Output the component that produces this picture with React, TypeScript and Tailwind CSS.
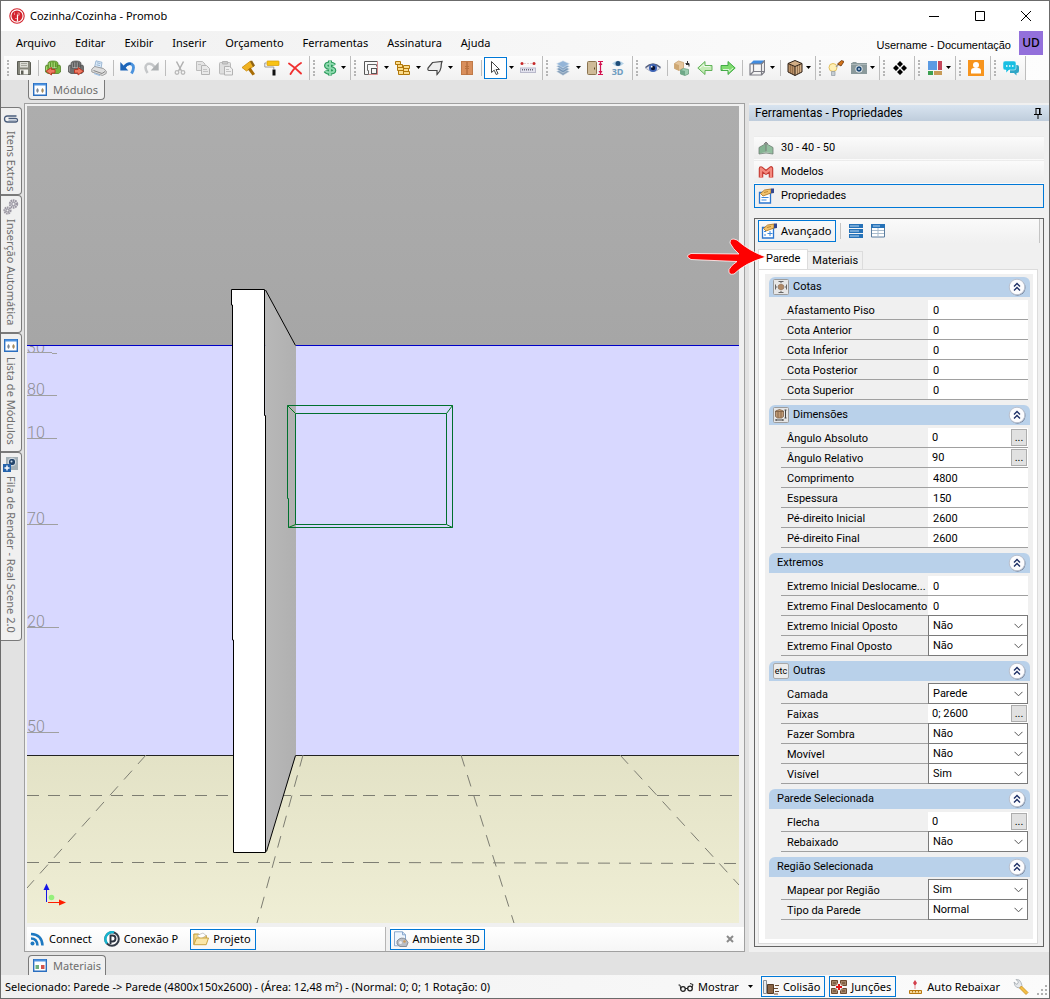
import { useState, type ReactNode } from 'react'
import clsx from 'clsx'

type Field = {
  label: string
  value: string
  kind?: 'text' | 'browse' | 'select'
  options?: string[]
}

type Section = {
  title: string
  icon?: ReactNode
  fields: Field[]
}

const YES_NO = ['Não', 'Sim']

function Svg({ children, className }: { children: ReactNode; className?: string }) {
  return (
    <svg viewBox="0 0 16 16" className={clsx('size-4 shrink-0', className)} fill="none" aria-hidden="true">
      {children}
    </svg>
  )
}

/* ---------- icons ---------- */

const CotasIcon = (
  <Svg>
    <rect x=".5" y=".5" width="15" height="15" rx="1" fill="#e6e6e6" stroke="#9c9c9c" />
    <path d="M5.500 2.500h5M5.500 13.500h5M2.500 5.500v5M13.500 5.500v5M8 3v1M8 13v-1M3 8h1.500M13 8h-1.500" stroke="#666" />
    <path d="M5.500 6.200L8 5l2.500 1.200v3.600L8 11l-2.500-1.200z" fill="#b08a66" stroke="#8a6547" strokeWidth=".6" />
  </Svg>
)

const DimensoesIcon = (
  <Svg>
    <rect x=".5" y=".5" width="15" height="15" rx="1" fill="#e6e6e6" stroke="#9c9c9c" />
    <path d="M2.500 4l4-1.500L10.500 4v5.500l-2 1.500h-4l-2-1.500z" fill="#c09a75" stroke="#6d5038" strokeWidth=".7" />
    <path d="M5 5v5.500M8 5v5.500M2.500 4.500h8" stroke="#6d5038" strokeWidth=".7" />
    <path d="M12.500 3v8M11.500 3h2M11.500 11h2M3 13h7M3 12v2M10 12v2" stroke="#444" />
  </Svg>
)

const EtcIcon = (
  <span className="flex size-4 items-center justify-center rounded-xs border border-[#a9a9a9] bg-[#ececec] text-[9px] leading-none">
    etc
  </span>
)

function LogoIcon() {
  return (
    <Svg>
      <circle cx="8" cy="8" r="7.200" fill="#fff" stroke="#d3242e" strokeWidth="1.100" />
      <circle cx="8" cy="8" r="5.500" fill="#d3242e" />
      <path d="M8.500 6.500v7" stroke="#fff" strokeWidth="1.200" />
      <path d="M8.500 5h1.700v2.200H8.500" stroke="#f6b5b8" strokeWidth=".8" />
      <path d="M5.500 4.500v2.500M6 10.500h2" stroke="#f6b5b8" strokeWidth=".7" />
    </Svg>
  )
}

function SaveIcon() {
  return (
    <Svg>
      <path d="M1.500 1.500h12l1 1v12h-13z" fill="#85867b" stroke="#5b5c54" />
      <path d="M4 2h8v5.500H4z" fill="#dcddd6" />
      <path d="M5 3.500h6M5 5.500h6" stroke="#a5a69d" />
      <path d="M4 9.500h8v5H4z" fill="#f3f3ee" />
      <path d="M5 10.500h2.500v4H5z" fill="#5c5d55" />
    </Svg>
  )
}

function SofaIcon({ color, dark, light, out }: { color: string; dark: string; light: string; out?: boolean }) {
  return (
    <Svg>
      <path d="M3 7.500V3.500Q3 1 8 1t5 2.500v4" fill={color} stroke={dark} strokeWidth=".7" />
      <path d="M.5 7q0-2 1.500-2t2 2v1.500h8V7q.5-2 2-2t1.500 2v5l-2 1.500H3L.5 12z" fill={color} stroke={dark} strokeWidth=".7" />
      <path d="M5.500 2.500v5M8 2v6M10.500 2.500v5" stroke={dark} strokeWidth=".5" />
      <path d="M4.300 3v4M6.800 2.500v5M9.300 2.500v5M1.500 6.500v5" stroke={light} strokeWidth=".8" />
      {out ? (
        <path d="M6.500 9.500h3.500V7.500l5.500 3.700-5.500 3.800v-2H6.500z" fill="#ee7a62" stroke="#b93422" strokeWidth=".9" />
      ) : (
        <path d="M10 9.500H6.500V7.500L1 11.200 6.500 15v-2H10z" fill="#ee7a62" stroke="#b93422" strokeWidth=".9" />
      )}
    </Svg>
  )
}

function PrinterIcon() {
  return (
    <Svg>
      <path d="M3.500 7.500L5 .8l6 1.500L10 8.500z" fill="#dcebf9" stroke="#8aa9cc" strokeWidth=".8" />
      <path d="M6 2.800l3.500.8M5.600 4.800l3.500.8" stroke="#7a9cc0" strokeWidth=".7" />
      <path d="M.8 9l3-2.500 8.500 2L15.200 11v2.500L11.500 15.500.8 12z" fill="#dedede" stroke="#8c8c8c" strokeWidth=".8" />
      <path d="M2.500 10.500l8.500 3 3-2" stroke="#6d6d6d" strokeWidth=".8" />
      <path d="M3 13.500l6 2" stroke="#9ec0e6" strokeWidth="1.300" />
    </Svg>
  )
}

function UndoIcon() {
  return (
    <Svg>
      <path d="M4 7.500Q7.500 2.500 11.500 4q4 2.500 0 9.500" stroke="#4b93de" strokeWidth="2.800" />
      <path d="M4 7.500Q7.500 3 11 4" stroke="#1d65b8" strokeWidth="2.500" />
      <path d="M.3 2v8.500h8z" fill="#1d65b8" />
    </Svg>
  )
}

function RedoIcon() {
  return (
    <Svg>
      <path d="M12 7.500Q8.500 2.500 4.500 4q-4 2.500 0 9" stroke="#c5c7c9" strokeWidth="2.500" />
      <path d="M15.700 2v8.500h-8z" fill="#aeb1b3" />
    </Svg>
  )
}

function CutIcon() {
  return (
    <Svg>
      <path d="M4.500 1.500l5 9.500M11.500 1.500l-5 9.500" stroke="#b0b0b0" strokeWidth="1.500" />
      <circle cx="5" cy="12.500" r="1.800" stroke="#b9b9b9" strokeWidth="1.300" />
      <circle cx="11" cy="12.500" r="1.800" stroke="#b9b9b9" strokeWidth="1.300" />
    </Svg>
  )
}

function CopyIcon() {
  return (
    <Svg>
      <path d="M1.500 1.500h6l2.500 2.500v6.500H1.500z" fill="#e4e4e4" stroke="#bcbcbc" />
      <path d="M6.500 5.500h5l3 3v6h-8z" fill="#e9e9e9" stroke="#b4b4b4" />
      <path d="M8 9.500h4M8 11.500h5M3 4.500h3" stroke="#c4c4c4" />
    </Svg>
  )
}

function PasteIcon() {
  return (
    <Svg>
      <rect x="1.500" y="2.500" width="11" height="11.500" rx="1" fill="#dedede" stroke="#bababa" />
      <path d="M4.500 1.500h5v2.500h-5z" fill="#c9c9c9" stroke="#b4b4b4" />
      <path d="M6.500 6.500h5l3 2.500v6h-8z" fill="#efefef" stroke="#b2b2b2" />
      <path d="M8 9.500h3M8 11.500h5" stroke="#c4c4c4" />
    </Svg>
  )
}

function BrushIcon() {
  return (
    <Svg>
      <path d="M1 7.500L9.500 1l3.500 5-7.500 5z" fill="#f0b323" stroke="#c98a0c" strokeWidth=".8" />
      <path d="M9 1.500l2-1 3 5-2 1.500z" fill="#8f6416" />
      <path d="M7 9.500l2.500-2L14 14l-2.500 1.500z" fill="#a86c05" />
    </Svg>
  )
}

function RollerIcon() {
  return (
    <Svg>
      <rect x="3" y="1" width="12" height="4.500" rx=".5" fill="#f8c314" stroke="#d59a00" strokeWidth=".7" />
      <path d="M2.500 3H.8v4h9v2" stroke="#9a9a9a" />
      <path d="M8.500 9.500h3v6h-3z" fill="#111" />
    </Svg>
  )
}

function DeleteIcon() {
  return (
    <Svg>
      <path d="M2 3.500q6 4 12 10M14 3Q8 6.500 3.500 14" stroke="#f03030" strokeWidth="1.900" strokeLinecap="round" />
    </Svg>
  )
}

function DollarIcon() {
  return (
    <Svg>
      <path d="M12.500 5.300Q11 3.500 8 3.500 4 3.500 4 5.800q0 1.700 4 2.200 4.300.5 4.300 2.500T8 12.700q-3.200 0-4.700-2M8 .5v15" stroke="#2b9a5b" strokeWidth="4" />
      <path d="M12.200 5.200Q10.700 3.600 8 3.600 4.200 3.600 4.200 5.800q0 1.700 3.800 2.200 4.200.5 4.200 2.500T8 12.600q-3 0-4.400-1.800M8 1v14" stroke="#8ed9ae" strokeWidth="2" />
    </Svg>
  )
}

function WallIcon() {
  return (
    <Svg>
      <path d="M1.500 14.500v-13h13" stroke="#555" />
      <path d="M14.500 1.500v13h-9" stroke="#d98a8a" />
      <path d="M1.500 14.500h4v-4h-1v-6h9v2" stroke="#666" />
      <rect x="8.500" y="8.500" width="5" height="5" stroke="#555" />
    </Svg>
  )
}

function BricksIcon() {
  return (
    <Svg>
      <path
        d="M.5 1.500h5v3h-5zM2.500 4.500h5v3h-5zM8.500 5.500h6v3h-6zM2.500 7.500h6v3h-6zM8.500 8.500h5v3h-5zM3.500 10.500h5v4h-5zM8.500 11.500h6v3h-6z"
        fill="#fbdc8c"
        stroke="#b07708"
      />
    </Svg>
  )
}

function ShapeIcon() {
  return (
    <Svg>
      <path d="M5.500 2.500l9.500-1q-1 2.500-1 6-.5 4-4 7v-4H2Q.500 10.500 1 8z" fill="#ededed" stroke="#444" strokeWidth="1.200" />
    </Svg>
  )
}

function DoorIcon() {
  return (
    <Svg>
      <rect x="2.500" y="1.500" width="11" height="13" fill="#d98f5c" stroke="#c07a48" />
      <path d="M8 2v12.500" stroke="#a45f30" />
      <path d="M6 6.500h4M6 8.500h4" stroke="#b8713e" />
    </Svg>
  )
}

function PointerIcon() {
  return (
    <Svg>
      <path d="M3.500 1.500v11l2.700-2.300 2 4.300 1.800-.9-2-4.100h3.500z" fill="#fff" stroke="#444" />
    </Svg>
  )
}

function RulerIcon() {
  return (
    <Svg>
      <circle cx="2" cy="3.500" r="1.500" fill="#c62828" />
      <circle cx="14" cy="3.500" r="1.500" fill="#c62828" />
      <path d="M4.500 3.500h1M7.500 3.500h1M10.500 3.500h1" stroke="#c99" />
      <rect x=".5" y="8" width="15" height="4.500" fill="#e3e3ef" stroke="#b9b9cb" />
      <path d="M2.500 9v1.500M4.500 9v1.500M6.500 9v1.500M8.500 9v1.500M10.500 9v1.500M12.500 9v1.500" stroke="#6a6a7a" />
    </Svg>
  )
}

function LayersIcon() {
  return (
    <Svg>
      <path d="M1.500 11.500l6.500-3 6.500 3L8 15.500z" fill="#8aa2bb" stroke="#dfe8f1" strokeWidth=".5" />
      <path d="M1.500 8.900l6.500-3 6.500 3-6.500 4z" fill="#7595b6" stroke="#dfe8f1" strokeWidth=".5" />
      <path d="M1.500 6.300l6.500-3 6.500 3-6.500 4z" fill="#86a5c6" stroke="#dfe8f1" strokeWidth=".5" />
      <path d="M1.500 3.800l6.500-3 6.500 3-6.500 4z" fill="#94b5d8" stroke="#dfe8f1" strokeWidth=".5" />
    </Svg>
  )
}

function HeightIcon() {
  return (
    <Svg>
      <rect x=".5" y="1.500" width="9" height="13" rx="1" fill="#cfbb98" stroke="#8b7450" />
      <path d="M7.500 7.500v2" stroke="#5b4526" />
      <path d="M11 1.500h5M11 14.500h5M13.500 2v12" stroke="#d3134f" strokeWidth="1.200" />
      <path d="M13.500 2l-2 3h4zM13.500 14l-2-3h4z" fill="#d3134f" />
    </Svg>
  )
}

function View3dIcon() {
  return (
    <span className="flex size-4 flex-col items-center text-[9px] font-bold leading-[9px] text-[#6f9dc0]">
      <svg viewBox="0 0 16 7" className="h-[7px] w-4" aria-hidden="true">
        <path d="M2 3.500Q8-2 14 3.500 8 9 2 3.500" fill="#b5d3e8" />
        <circle cx="8" cy="3.500" r="2.500" fill="#1f4d78" />
      </svg>
      3D
    </span>
  )
}

function EyeIcon() {
  return (
    <Svg>
      <path d="M.3 8Q8 .8 15.700 8 8 14.800.3 8" fill="#dedee8" stroke="#a5a9bd" strokeWidth=".8" />
      <path d="M.5 7.500Q8 .8 15.500 7.500" stroke="#56617f" strokeWidth="1.500" />
      <circle cx="8" cy="8" r="4" fill="#3f66b8" />
      <circle cx="8" cy="8" r="2.200" fill="#0a1230" />
      <circle cx="6.700" cy="6.700" r=".9" fill="#fff" />
    </Svg>
  )
}

function CubesIcon() {
  return (
    <Svg>
      <path d="M.5 3.500L4.500 1l5 1.500V8L5 10.500.5 8.500z" fill="#e5c69c" stroke="#c29a66" strokeWidth=".7" />
      <path d="M.5 3.500L5 5v5.500L.5 8.500z" fill="#cfa873" />
      <path d="M6.500 10l3-1.500 5 1V14l-3.500 1.500-4.500-1.500z" fill="#9dcdb0" stroke="#5e9a76" strokeWidth=".7" />
      <path d="M6.500 10l4.500 1v4.500L6.500 14z" fill="#6fa888" />
      <path d="M11.500 3.500h3.500v3M13.500 1v4M12 4.500h3" stroke="#333" />
    </Svg>
  )
}

function ArrowIcon({ flip }: { flip?: boolean }) {
  return (
    <Svg className={clsx(flip && 'rotate-180')}>
      <path d="M.8 8L8 1.500v4h7v5H8v4z" fill={flip ? '#7fdb6f' : '#c4ecb6'} stroke={flip ? '#35a43c' : '#55ab4c'} strokeWidth=".9" />
      <path d="M3 8l4-3.500v2h6" stroke="#fff" strokeOpacity=".7" />
    </Svg>
  )
}

function FrameCubeIcon() {
  return (
    <Svg>
      <path d="M1 4L4.500.5H16L13 4z" fill="#3f8be0" />
      <path d="M1 4h11.500v11H1zM12.500 4L15.500.8v11L12.500 15M4.500 4v7.500h11M4.500 11.500L1 15" stroke="#7d7d85" strokeWidth="1.200" />
    </Svg>
  )
}

function WoodCubeIcon() {
  return (
    <Svg>
      <path d="M1 3.500l7-3 7 3v8.500l-7 3.500-7-3.500z" fill="#d2ae86" />
      <path d="M1 3.500l7 3v9l-7-3.500z" fill="#b98f65" />
      <path d="M3.500 5v8M5.500 6v8M10.500 6v8M12.500 5v8" stroke="#8a6642" strokeWidth=".8" />
      <path d="M1 3.500l7-3 7 3v8.500l-7 3.500-7-3.500zM1 3.500l7 3 7-3M8 6.500v9" stroke="#2e2117" />
    </Svg>
  )
}

function BulbIcon() {
  return (
    <Svg>
      <circle cx="5" cy="7.500" r="4" fill="#fff0b5" stroke="#e3c05f" />
      <path d="M3.500 11.500h3.500v4H3.500z" fill="#c5cdd3" stroke="#909ba3" strokeWidth=".7" />
      <path d="M8 7l3-3" stroke="#9a9a9a" strokeWidth="1.300" />
      <path d="M9.500 4L13.500.5l2.500 1-3 4.500z" fill="#d2741b" stroke="#6b3408" strokeWidth=".8" />
    </Svg>
  )
}

function CameraIcon() {
  return (
    <Svg>
      <path d="M0 3h16v11H0zM1.500 2h4v1h-4z" fill="#8b9a9c" />
      <path d="M0 4.500h16" stroke="#a9b5b7" />
      <circle cx="8" cy="9" r="3.500" fill="#fff" />
      <circle cx="8" cy="9" r="2.700" fill="#1f4b76" />
      <circle cx="8" cy="9" r=".9" fill="#cfe0f0" />
    </Svg>
  )
}

function DiamondsIcon() {
  return (
    <Svg>
      <path d="M8 1l3 3-3 3-3-3zM4 5l3 3-3 3-3-3zM12 5l3 3-3 3-3-3zM8 9l3 3-3 3-3-3z" fill="#000" />
    </Svg>
  )
}

function BlocksIcon() {
  return (
    <Svg>
      <path d="M1 1h9v9H1z" fill="#5b9be3" />
      <path d="M11 1h4v9h-4z" fill="#c4475b" />
      <path d="M1 11h5v4H1z" fill="#3ca050" />
      <path d="M7 11h8v4H7z" fill="#c89b57" />
    </Svg>
  )
}

function UserIcon() {
  return (
    <Svg>
      <path d="M0 0h16v16H0z" fill="#f7941d" />
      <circle cx="8" cy="5" r="3" fill="#fff" />
      <path d="M3 13.500V11q0-3 3-3h4q3 0 3 3v2.500z" fill="#fff" />
    </Svg>
  )
}

function ChatIcon() {
  return (
    <Svg>
      <path d="M7 5h7q2 0 2 2v4q0 2-2 2h-.5v2.500L11 13H7z" fill="#2fa6c6" />
      <path d="M2 1h9q2 0 2 2v5q0 2-2 2H6l-3 3v-3H2q-2 0-2-2V3q0-2 2-2z" fill="#18bfe3" stroke="#fff" strokeWidth=".5" />
      <path d="M3 6h1.500M6 6h1.500M9 6h1.500" stroke="#fff" strokeWidth="1.300" />
    </Svg>
  )
}

function PanelIcon({ red, className }: { red?: boolean; className?: string }) {
  return (
    <svg viewBox="0 0 14 13" className={clsx('h-[13px] w-3.5 shrink-0', className)} fill="none" aria-hidden="true">
      <path d="M.7.7h12.600v11.600H.7z" fill="#fff" stroke="#2b6fc0" strokeWidth="1.400" />
      <path d="M1 1.500h12" stroke="#4d92e0" strokeWidth="2" />
      <path d={red ? 'M2.500 6h3.500v4H2.500z' : 'M4.500 5q2.500 2.500 0 5-2.500-2.500 0-5z'} fill={red ? '#6faf7b' : '#7d8793'} />
      <path d={red ? 'M8 6h3.500v4H8z' : 'M9.500 5q2.500 2.500 0 5-2.500-2.500 0-5z'} fill={red ? '#d3544c' : '#a58a5c'} />
    </svg>
  )
}

function ClipIcon() {
  return (
    <Svg>
      <path d="M13.500 5H4.500Q1.500 5 1.500 8t3 3h8q2 0 2-1.800T12.500 7.300H5.500" stroke="#4a5d7c" strokeWidth="1.300" />
      <path d="M13 9.200H5.500" stroke="#8fa0ba" />
    </Svg>
  )
}

function GearsIcon() {
  return (
    <Svg>
      <circle cx="10.500" cy="5" r="3.500" stroke="#9b97a3" strokeWidth="2.400" strokeDasharray="1.600 .6" />
      <circle cx="10.500" cy="5" r="1.700" fill="#f0f0f0" stroke="#8a8694" />
      <circle cx="4.500" cy="11.500" r="3" stroke="#9b97a3" strokeWidth="2.200" strokeDasharray="1.600 .6" />
      <circle cx="4.500" cy="11.500" r="1.400" fill="#f0f0f0" stroke="#8a8694" />
    </Svg>
  )
}

function RenderIcon() {
  return (
    <Svg>
      <path d="M3 1h12v13H3z" fill="#a3afb5" />
      <circle cx="9" cy="6" r="3.800" fill="#24456b" stroke="#e6ecef" />
      <circle cx="8.500" cy="5.500" r="1" fill="#cfe0f0" />
      <path d="M0 8h8v8H0z" fill="#2563ab" />
      <path d="M4 9.500v5M1.500 12h5" stroke="#fff" strokeWidth="1.400" />
    </Svg>
  )
}

function HandFormIcon({ plus }: { plus?: boolean }) {
  return (
    <Svg>
      <path d="M1.500 4.500h11v10.500h-11z" fill="#fff" stroke="#2b76cf" strokeWidth="1.300" />
      {plus ? (
        <path d="M3 8.500h2M3 12h2M9 8v5M6.500 10.500h5" stroke="#3d88db" />
      ) : (
        <path d="M3.500 9.500h7M3.500 12h5" stroke="#3d88db" />
      )}
      <path d="M2.500 5.500L6.500 2l6.500-1v4L9 6.500 5 8z" fill="#f2c26b" stroke="#a9701c" strokeWidth=".8" />
      <path d="M6 4.500l4-1" stroke="#a9701c" strokeWidth=".7" />
      <path d="M13 .5h3v4.500l-3 .5z" fill="#34488f" />
    </Svg>
  )
}

function GreenWallIcon() {
  return (
    <Svg>
      <path d="M1 7.500L8 4v7.500L1 14z" fill="#7fae8d" />
      <path d="M8 4l7 3.500V14l-7-2.500z" fill="#9cc5a6" />
      <path d="M1 14V7.500L8 3.500l7 4V14q-7-2-14 0" stroke="#6f7f73" strokeWidth=".8" fill="#8ab897" fillOpacity=".5" />
      <path d="M8 2v9.500M6 4l2-2 2 2" stroke="#777" strokeWidth=".9" />
    </Svg>
  )
}

function ModelIcon() {
  return (
    <Svg>
      <path d="M3 13.500V4.500L8 8.500l5-4v9" stroke="#c33a32" strokeWidth="4.500" strokeLinejoin="round" />
      <path d="M3 13.800V4.500L8 8.700l5-4.200v9.300" stroke="#f4897e" strokeWidth="2.300" strokeLinejoin="round" />
    </Svg>
  )
}

function PinIcon() {
  return (
    <svg viewBox="0 0 8 11" className="h-[11px] w-2" fill="none" aria-hidden="true">
      <path d="M1.500.5h5M2 .5V6M5.500.5V6M0 6.500h8M4 6.500V11" stroke="#000" />
      <path d="M5 0h1.500v6H5z" fill="#000" />
    </svg>
  )
}

function RssIcon() {
  return (
    <Svg>
      <circle cx="3.500" cy="12.500" r="2" fill="#1d78c1" />
      <path d="M2 7.500q6 0 6.500 7M2 3q11 .5 11.500 11.500" stroke="#1d78c1" strokeWidth="2.500" />
    </Svg>
  )
}

function ConexaoIcon() {
  return (
    <Svg>
      <circle cx="8" cy="8" r="6.800" fill="#fff" stroke="#333c48" strokeWidth="2" />
      <path d="M10 1.300A7 7 0 003 12.500" stroke="#17b4cf" strokeWidth="2.400" />
      <path d="M6.500 13V4.500h2q3 0 3 3t-3 3h-2" stroke="#2c3440" strokeWidth="1.900" />
    </Svg>
  )
}

function FolderIcon() {
  return (
    <Svg>
      <path d="M.8 13.500V3h5l1.500 1.500h6V7" fill="#f3d88a" stroke="#b8922e" strokeWidth=".9" />
      <path d="M4 4.500L10 2l3 2.500-5 3.500z" fill="#fff" stroke="#aaa" strokeWidth=".6" />
      <path d="M3.500 7H15.500l-2.300 6.700H.8z" fill="#fbe7a8" stroke="#c49c38" strokeWidth=".9" />
    </Svg>
  )
}

function AmbientIcon() {
  return (
    <Svg>
      <path d="M1.500.8h8l3 3v11h-11z" fill="#eef5fd" stroke="#7d9fc8" strokeWidth=".9" />
      <path d="M9.500.8v3h3" stroke="#7d9fc8" strokeWidth=".9" />
      <path d="M4 10q4-5 9-1.500l2 3-1.500 4H7l-3-2.500z" fill="#b9bdc4" stroke="#757b85" strokeWidth=".8" />
      <circle cx="7.500" cy="11.500" r="1.500" fill="#eef0f4" />
      <circle cx="11.500" cy="10.500" r="1.300" fill="#cc9b5a" />
    </Svg>
  )
}

function GlassesIcon() {
  return (
    <Svg>
      <circle cx="5" cy="10" r="2.300" stroke="#222" strokeWidth="1.300" />
      <circle cx="12" cy="9.500" r="2.300" stroke="#222" strokeWidth="1.300" />
      <path d="M7.300 9.500h2.400M2.700 10L2 6H.5M14 8.500l1-3-3-1" stroke="#222" />
    </Svg>
  )
}

function CollisionIcon() {
  return (
    <Svg>
      <path d="M.5 1.500h3v13h-3z" fill="#e8ebee" stroke="#8a9096" />
      <path d="M4.500 5.500h6v9h-6z" fill="#8a6546" stroke="#553a24" />
      <path d="M12 6.500h4M11 9.500h4M12 12.500h4M11 15h4" stroke="#6b4b32" />
    </Svg>
  )
}

function JunctionIcon() {
  return (
    <Svg>
      <path d="M.5 1.500h6v5h-6zM9.500 1.500h6v5h-6zM.5 9.500h6v5h-6zM9.500 9.500h6v5h-6z" fill="#a58468" stroke="#6b4b32" />
      <path d="M2 4h3M11 4h3M2 12h3M11 12h3" stroke="#5e4229" />
      <path d="M8 4.500v7M4.500 8h7" stroke="#fff" strokeWidth="3.500" />
      <path d="M8 5v6M5 8h6" stroke="#e01515" strokeWidth="2" />
    </Svg>
  )
}

function LowerIcon() {
  return (
    <Svg>
      <path d="M8 1l2 3-2 3-2-3z" fill="#d33f4c" />
      <path d="M8 7v3" stroke="#e08a92" />
      <path d="M2.500 11.500h12v3h-12z" fill="#f4d79b" stroke="#b9780f" />
      <path d="M5.500 12v1.500M8.500 12v1.500M11.500 12v1.500" stroke="#b9780f" />
    </Svg>
  )
}

function WrenchIcon() {
  return (
    <Svg>
      <path d="M3 .5q4-.5 5 3l1 3-2 2.500q-4 0-5-2.500L1 3l3 2.500L5.500 3z" fill="#e6e9ec" stroke="#a1a8ae" strokeWidth=".8" />
      <path d="M8.500 7l6.500 6.500-2 2L6.500 9z" fill="#f5be45" stroke="#c78f20" strokeWidth=".8" />
    </Svg>
  )
}

function Chevrons() {
  return (
    <svg viewBox="0 0 18 18" className="size-[18px]" fill="none" aria-hidden="true">
      <circle cx="9.500" cy="9.700" r="8" fill="#74829a" />
      <circle cx="9" cy="9" r="7.800" fill="#fcfcfe" stroke="#b9c1cf" />
      <path d="M6 8.500l3-3 3 3M6 12.500l3-3 3 3" stroke="#1d2f66" strokeWidth="1.400" />
    </svg>
  )
}

/* ---------- toolbar pieces ---------- */

function Caret({ className }: { className?: string }) {
  return (
    <span className={clsx('flex shrink-0 items-center justify-center overflow-visible', className)}>
      <svg viewBox="0 0 5 3" className="h-[3px] w-[5px] shrink-0" aria-hidden="true">
        <path d="M0 0h5L2.500 3z" fill="#000" />
      </svg>
    </span>
  )
}

function Tool({ label, children, active }: { label: string; children: ReactNode; active?: boolean }) {
  return (
    <button
      type="button"
      title={label}
      aria-label={label}
      className={clsx(
        'flex h-[22px] w-[23px] shrink-0 items-center justify-center',
        active && 'border border-[#0078d7] bg-white',
      )}
    >
      {children}
    </button>
  )
}

function Sep() {
  return (
    <span className="flex h-4 w-1.5 shrink-0 justify-center">
      <span className="w-px bg-[#bdbdbd]" />
    </span>
  )
}

function ToolGroup({ children, tight }: { children: ReactNode; tight?: boolean }) {
  return (
    <div
      className={clsx(
        'flex h-6 shrink-0 items-center border-r border-[#bdbdbd] bg-linear-to-b from-[#fdfdfd] to-[#f1f1f1]',
        tight ? 'pr-1' : 'pr-[3px]',
      )}
    >
      <span className="flex w-2 shrink-0 justify-center">
        <span className="h-4 border-l-2 border-dotted border-[#b5b5b5]" />
      </span>
      {children}
    </div>
  )
}

function Toolbar() {
  return (
    <div className="flex h-[25px] items-center overflow-hidden pl-[3px]">
      <ToolGroup>
        <Tool label="Salvar"><SaveIcon /></Tool>
        <Sep />
        <Tool label="Importar"><SofaIcon color="#76b53c" dark="#47761c" light="#b6de8a" /></Tool>
        <Tool label="Exportar"><SofaIcon color="#6f6f6f" dark="#474747" light="#a5a5a5" out /></Tool>
        <Tool label="Imprimir"><PrinterIcon /></Tool>
        <Sep />
        <Tool label="Desfazer"><UndoIcon /></Tool>
        <Tool label="Refazer"><RedoIcon /></Tool>
        <Sep />
        <Tool label="Recortar"><CutIcon /></Tool>
        <Tool label="Copiar"><CopyIcon /></Tool>
        <Tool label="Colar"><PasteIcon /></Tool>
        <Tool label="Pincel"><BrushIcon /></Tool>
        <Tool label="Rolo"><RollerIcon /></Tool>
        <Tool label="Excluir"><DeleteIcon /></Tool>
      </ToolGroup>
      <ToolGroup tight>
        <Tool label="Preço"><DollarIcon /></Tool>
        <Caret className="w-[5px]" />
      </ToolGroup>
      <ToolGroup>
        <Tool label="Paredes"><WallIcon /></Tool>
        <Caret className="w-[9px]" />
        <Tool label="Tijolos"><BricksIcon /></Tool>
        <Caret className="w-[9px]" />
        <Tool label="Forma"><ShapeIcon /></Tool>
        <Caret className="w-[9px]" />
        <Tool label="Porta"><DoorIcon /></Tool>
        <Sep />
        <Tool label="Selecionar" active><PointerIcon /></Tool>
        <Caret className="w-[9px]" />
        <Tool label="Medir"><RulerIcon /></Tool>
      </ToolGroup>
      <ToolGroup>
        <Tool label="Camadas"><LayersIcon /></Tool>
        <Caret className="w-[9px]" />
        <Tool label="Altura"><HeightIcon /></Tool>
        <Tool label="Vista 3D"><View3dIcon /></Tool>
      </ToolGroup>
      <ToolGroup tight>
        <Tool label="Visualizar"><EyeIcon /></Tool>
        <Sep />
        <Tool label="Módulos"><CubesIcon /></Tool>
        <Tool label="Anterior"><ArrowIcon /></Tool>
        <Tool label="Próximo"><ArrowIcon flip /></Tool>
        <Sep />
        <Tool label="Perspectiva"><FrameCubeIcon /></Tool>
        <Caret className="w-[9px]" />
        <Sep />
        <Tool label="Textura"><WoodCubeIcon /></Tool>
        <Caret className="w-[5px]" />
      </ToolGroup>
      <ToolGroup tight>
        <Tool label="Luz"><BulbIcon /></Tool>
        <Tool label="Câmera"><CameraIcon /></Tool>
        <Caret className="w-[5px]" />
      </ToolGroup>
      <ToolGroup>
        <Tool label="Mover"><DiamondsIcon /></Tool>
      </ToolGroup>
      <ToolGroup tight>
        <Tool label="Janelas"><BlocksIcon /></Tool>
        <Caret className="w-[5px]" />
      </ToolGroup>
      <ToolGroup>
        <Tool label="Usuário"><UserIcon /></Tool>
      </ToolGroup>
      <ToolGroup>
        <Tool label="Conversa"><ChatIcon /></Tool>
      </ToolGroup>
    </div>
  )
}

/* ---------- side tabs ---------- */

const SIDE_TABS = [
  { label: 'Itens Extras', icon: <ClipIcon />, size: 'h-[88px]' },
  { label: 'Inserção Automática', icon: <GearsIcon />, size: 'h-[138px]' },
  { label: 'Lista de Módulos', icon: <PanelIcon />, size: 'h-[119px]' },
  { label: 'Fila de Render - Real Scene 2.0', icon: <RenderIcon />, size: 'h-[189px]' },
]

function SideTabs() {
  return (
    <div className="flex w-[23px] shrink-0 flex-col pt-1">
      {SIDE_TABS.map((tab) => (
        <button
          key={tab.label}
          type="button"
          className={clsx(
            'flex w-[21px] shrink-0 flex-col items-center gap-1 rounded-r-sm border border-l-0 border-[#7a7a7a] bg-[#f0f0f0] pt-[3px] text-[#6d6d6d]',
            tab.size,
          )}
        >
          <span className="flex size-4 items-center justify-center">{tab.icon}</span>
          <span className="whitespace-nowrap leading-4 [writing-mode:vertical-rl]">{tab.label}</span>
        </button>
      ))}
    </div>
  )
}

/* ---------- 3D view ---------- */

const RULER_MARKS = [
  { text: '80', y: 395, end: 57 },
  { text: '10', y: 438, end: 57 },
  { text: '70', y: 524, end: 58 },
  { text: '20', y: 627, end: 59 },
  { text: '50', y: 732, end: 59 },
]

function Scene() {
  return (
    <svg
      viewBox="27 106 712 817"
      preserveAspectRatio="xMidYMid slice"
      className="block h-0 min-h-[400px] w-full flex-1"
      fill="none"
      role="img"
      aria-label="Ambiente 3D"
    >
      <defs>
        <linearGradient id="ceiling" x1="0" y1="0" x2="0" y2="1">
          <stop offset="0" stopColor="#adadad" />
          <stop offset="1" stopColor="#a6a6a6" />
        </linearGradient>
        <linearGradient id="floor" x1="0" y1="0" x2="0" y2="1">
          <stop offset="0" stopColor="#e3e2c6" />
          <stop offset="1" stopColor="#efeed5" />
        </linearGradient>
        <linearGradient id="side" x1="0" y1="0" x2="1" y2="0">
          <stop offset="0" stopColor="#b8b8b8" />
          <stop offset="1" stopColor="#b0b0b0" />
        </linearGradient>
      </defs>
      <path d="M27 345h712v410H27z" fill="#d8d8ff" />
      <path d="M27 755h712v168H27z" fill="url(#floor)" />
      <text x="27" y="353" fill="#8f8f93" fontSize="16" fontFamily="Roboto, sans-serif" fontWeight="300">30</text>
      <path d="M27 106h712v239H27z" fill="url(#ceiling)" />
      <path d="M27 345.500h712" stroke="#0000c8" />
      <path d="M27 755.500h712" stroke="#222" />

      {/* floor tiles */}
      <g stroke="#7d7d72" strokeDasharray="12 9">
        <path d="M27 795.500h712M27 862.500h340" />
        <path d="M367 862.500l372 1" />
        <path d="M146 755L27 888M303 755l-46 168M461 755l53 168M620 755l119 130" />
      </g>

      {/* ruler */}
      <g stroke="#a0a0a0">
        <path d="M27 352.500h25M52 353.500h5" />
        {RULER_MARKS.map((m) => (
          <path key={m.y} d={`M27 ${m.y + 0.5}H${m.end}`} />
        ))}
      </g>
      <g fill="#8f8f93" fontSize="16" fontFamily="Roboto, sans-serif" fontWeight="300">
        {RULER_MARKS.map((m) => (
          <text key={m.y} x="27" y={m.y}>{m.text}</text>
        ))}
      </g>

      {/* wall */}
      <path d="M265 290l31 55v410l-30 97z" fill="url(#side)" />
      <path d="M265.500 290l30 55.500M295.500 755.500l-29 96" stroke="#000" />
      <path d="M231.500 289.500h33v126h1v437h-32V640h-1V305h-1z" fill="#fff" stroke="#000" />

      {/* opening */}
      <path d="M287.500 405.500h165v122h-164v-29h-1zM295.500 413.500h151v111h-151z" stroke="#00702e" />
      <path d="M287.500 405.500l8 8M452.500 405.500l-6 8M288.500 527.500l7-3M452.500 527.500l-6-3" stroke="#007a1c" />

      {/* axes */}
      <path d="M46.500 902V888" stroke="#1414e6" />
      <path d="M43.500 890l3-6.500 3 6.500z" fill="#1414e6" />
      <path d="M48 902.500h12" stroke="#ff1e00" />
      <path d="M59 899.500l7 3-7 3z" fill="#ff1e00" />
      <circle cx="51.500" cy="897.500" r="2.800" fill="#96f07c" />
    </svg>
  )
}

function ViewPanel() {
  return (
    <div className="flex min-w-0 flex-1 flex-col border border-[#a0a0a0] bg-[#f0f0f0] pt-0.5 pl-0.5">
      <div className="flex flex-1 flex-col pr-[5px]">
        <Scene />
      </div>
      <div className="mt-1 flex h-6 items-stretch gap-1">
        <div className="flex w-1/2 shrink-0 items-center border-r border-[#b5b5b5] bg-linear-to-b from-white to-[#f6f6f6] pl-0.5">
          <button type="button" className="flex items-center gap-1 whitespace-nowrap">
            <RssIcon />
            Connect
          </button>
          <button type="button" className="ml-3 flex items-center gap-1 whitespace-nowrap">
            <ConexaoIcon />
            Conexão P
          </button>
          <button
            type="button"
            className="ml-3 flex h-[21px] items-center gap-1 whitespace-nowrap border border-[#0078d7] px-0.5 pr-1"
          >
            <FolderIcon />
            Projeto
          </button>
        </div>
        <div className="flex min-w-0 flex-1 items-center justify-between bg-linear-to-b from-white to-[#f6f6f6] pr-2">
          <button
            type="button"
            className="flex h-[21px] items-center gap-1 whitespace-nowrap border border-[#0078d7] px-0.5 pr-1"
          >
            <AmbientIcon />
            Ambiente 3D
          </button>
          <button type="button" aria-label="Fechar" className="p-0.5">
            <svg viewBox="0 0 8 8" className="size-2" aria-hidden="true">
              <path d="M1 1l6 6M7 1L1 7" stroke="#8a8a8a" strokeWidth="2" />
            </svg>
          </button>
        </div>
      </div>
    </div>
  )
}

/* ---------- properties ---------- */

const SECTIONS: Section[] = [
  {
    title: 'Cotas',
    icon: CotasIcon,
    fields: [
      { label: 'Afastamento Piso', value: '0' },
      { label: 'Cota Anterior', value: '0' },
      { label: 'Cota Inferior', value: '0' },
      { label: 'Cota Posterior', value: '0' },
      { label: 'Cota Superior', value: '0' },
    ],
  },
  {
    title: 'Dimensões',
    icon: DimensoesIcon,
    fields: [
      { label: 'Ângulo Absoluto', value: '0', kind: 'browse' },
      { label: 'Ângulo Relativo', value: '90', kind: 'browse' },
      { label: 'Comprimento', value: '4800' },
      { label: 'Espessura', value: '150' },
      { label: 'Pé-direito Inicial', value: '2600' },
      { label: 'Pé-direito Final', value: '2600' },
    ],
  },
  {
    title: 'Extremos',
    fields: [
      { label: 'Extremo Inicial Deslocame...', value: '0' },
      { label: 'Extremo Final Deslocamento', value: '0' },
      { label: 'Extremo Inicial Oposto', value: 'Não', kind: 'select', options: YES_NO },
      { label: 'Extremo Final Oposto', value: 'Não', kind: 'select', options: YES_NO },
    ],
  },
  {
    title: 'Outras',
    icon: EtcIcon,
    fields: [
      { label: 'Camada', value: 'Parede', kind: 'select', options: ['Parede'] },
      { label: 'Faixas', value: '0; 2600', kind: 'browse' },
      { label: 'Fazer Sombra', value: 'Não', kind: 'select', options: YES_NO },
      { label: 'Movível', value: 'Não', kind: 'select', options: YES_NO },
      { label: 'Visível', value: 'Sim', kind: 'select', options: YES_NO },
    ],
  },
  {
    title: 'Parede Selecionada',
    fields: [
      { label: 'Flecha', value: '0', kind: 'browse' },
      { label: 'Rebaixado', value: 'Não', kind: 'select', options: YES_NO },
    ],
  },
  {
    title: 'Região Selecionada',
    fields: [
      { label: 'Mapear por Região', value: 'Sim', kind: 'select', options: YES_NO },
      { label: 'Tipo da Parede', value: 'Normal', kind: 'select', options: ['Normal'] },
    ],
  },
]

function PropertyRow({ field, id }: { field: Field; id: string }) {
  const [value, setValue] = useState(field.value)

  return (
    <div className="flex h-5">
      <label htmlFor={id} className="w-[147px] shrink-0 truncate border-b border-[#a0a0a0] pl-1.5 leading-[21px]">
        {field.label}
      </label>
      {field.kind === 'select' ? (
        <div className="relative -mt-px min-w-0 flex-1 border border-[#7a7a7a] bg-white">
          <select
            id={id}
            value={value}
            onChange={(e) => setValue(e.target.value)}
            className="block h-full w-full appearance-none bg-transparent pl-1 leading-4 outline-none"
          >
            {field.options?.map((o) => (
              <option key={o}>{o}</option>
            ))}
          </select>
          <svg
            viewBox="0 0 9 6"
            className="pointer-events-none absolute top-[7px] right-1 h-1.5 w-[9px]"
            fill="none"
            aria-hidden="true"
          >
            <path d="M.5.8l4 4 4-4" stroke="#555" />
          </svg>
        </div>
      ) : (
        <div className="flex min-w-0 flex-1 border-b border-[#a0a0a0] bg-white">
          <input
            id={id}
            type="text"
            value={value}
            onChange={(e) => setValue(e.target.value)}
            className={clsx(
              'min-w-0 flex-1 bg-transparent leading-4 outline-none',
              field.kind === 'browse' ? 'pl-1' : 'pt-0.5 pl-[5px]',
            )}
          />
          {field.kind === 'browse' && (
            <button
              type="button"
              aria-label={`Editar ${field.label}`}
              className="mt-px mr-px h-[17px] w-4 shrink-0 border border-[#adadad] bg-[#e1e1e1] leading-3"
            >
              ...
            </button>
          )}
        </div>
      )}
    </div>
  )
}

function PropertySection({ section, index }: { section: Section; index: number }) {
  const [open, setOpen] = useState(true)

  return (
    <section className="mb-[5px]">
      <button
        type="button"
        aria-expanded={open}
        onClick={() => setOpen((o) => !o)}
        className="flex h-5 w-full items-center gap-1 rounded-t-md bg-[#b9d1ea] pr-1 pl-1 text-left"
      >
        {section.icon}
        <span className={clsx('flex-1', !section.icon && 'pl-1')}>{section.title}</span>
        <Chevrons />
      </button>
      {open && (
        <div className="mt-[3px] mr-0.5 ml-3">
          {section.fields.map((field, i) => (
            <PropertyRow key={field.label} field={field} id={`prop-${index}-${i}`} />
          ))}
        </div>
      )}
    </section>
  )
}

const PANES = [
  { label: '30 - 40 - 50', icon: <GreenWallIcon /> },
  { label: 'Modelos', icon: <ModelIcon /> },
  { label: 'Propriedades', icon: <HandFormIcon /> },
]

function PropertiesPanel() {
  const [pane, setPane] = useState('Propriedades')

  return (
    <aside className="relative flex w-[300px] shrink-0 flex-col bg-[#f0f0f0] px-[5px] pb-[5px] font-[Roboto,'Liberation_Sans',sans-serif]">
      <div className="-mx-[5px] mt-0.5 flex h-4 items-center justify-between bg-linear-to-b from-[#d8e4f0] to-[#bfcddc] pr-[7px] pl-1.5 text-xs">
        <h2>Ferramentas - Propriedades</h2>
        <PinIcon />
      </div>

      <nav className="mt-[15px] flex flex-col">
        {PANES.map((p) => (
          <button
            key={p.label}
            type="button"
            onClick={() => setPane(p.label)}
            className={clsx(
              'flex h-6 items-center gap-[7px] border pl-[3px] text-left',
              pane === p.label
                ? 'border-[#0078d7] bg-[#f0f0f0]'
                : 'border-transparent bg-linear-to-b from-[#fbfbfb] to-[#ececec]',
            )}
          >
            {p.icon}
            {p.label}
          </button>
        ))}
      </nav>

      <div className="mt-2.5 flex flex-1 flex-col border border-[#646464] px-[3px] pb-0.5">
        <div className="flex h-6 items-center border-r border-[#c4c4c4] bg-linear-to-b from-[#fafafa] to-[#f0f0f0] font-['Noto_Sans','Segoe_UI',sans-serif]">
          <button type="button" className="flex h-[22px] items-center gap-1 border border-[#0078d7] px-0.5 pr-1">
            <HandFormIcon plus />
            Avançado
          </button>
          <span className="mx-1 h-4 w-px bg-[#c4c4c4]" />
          <button type="button" aria-label="Lista" className="px-1">
            <svg viewBox="0 0 14 14" className="size-3.5" aria-hidden="true">
              <path d="M0 0h14v4H0zM0 5h14v4H0zM0 10h14v4H0z" fill="#2672b8" />
              <path d="M1 2h9M1 7h9M1 12h9" stroke="#bcd9f2" />
            </svg>
          </button>
          <button type="button" aria-label="Tabela" className="px-1">
            <svg viewBox="0 0 14 14" className="size-3.5" fill="none" aria-hidden="true">
              <path d="M.5.5h13v12.500H.5z" fill="#fff" stroke="#5b7d9f" />
              <path d="M0 0h14v4H0z" fill="#2672b8" />
              <path d="M2 2h7" stroke="#bcd9f2" />
              <path d="M1 6.500h12M1 9.500h12M7 4v9" stroke="#a9bccd" />
            </svg>
          </button>
        </div>

        <div role="tablist" className="mt-1.5 flex items-end">
          <button
            type="button"
            role="tab"
            aria-selected="true"
            className="-mb-px h-[21px] border border-b-0 border-[#dcdcdc] bg-white px-[7px] pb-0.5"
          >
            Parede
          </button>
          <button type="button" role="tab" aria-selected="false" className="h-[18px] border border-b-0 border-l-0 border-[#dcdcdc] px-1">
            Materiais
          </button>
        </div>

        <div className="mr-0.5 flex-1 border border-[#dcdcdc] bg-white px-1 pt-1 pb-1 pl-1.5">
          <div className="h-full bg-[#f0f0f0] pt-[3px] pr-[3px] pl-1">
            {SECTIONS.map((s, i) => (
              <PropertySection key={s.title} section={s} index={i} />
            ))}
          </div>
        </div>
      </div>

      {/* callout arrow */}
      <svg
        viewBox="0 0 80 40"
        className="pointer-events-none absolute top-[134px] -left-[62px] h-10 w-20"
        fill="none"
        aria-hidden="true"
      >
        <path
          d="M4 16.500q-7 2.500 0 6l46 2q-6 4-8 8-1 6 5 4.500Q58 26 79 20 62 14 50 3q-7-3-7 3 3 6 9 11z"
          fill="#fe0000"
          stroke="#fff"
          strokeWidth=".8"
        />
      </svg>
    </aside>
  )
}

/* ---------- shell ---------- */

const MENUS = ['Arquivo', 'Editar', 'Exibir', 'Inserir', 'Orçamento', 'Ferramentas', 'Assinatura', 'Ajuda']

function StatusButton({ active, icon, label }: { active?: boolean; icon: ReactNode; label: string }) {
  return (
    <button
      type="button"
      className={clsx(
        'flex h-[21px] items-center gap-1 whitespace-nowrap border px-px pr-1',
        active ? 'border-[#0078d7]' : 'border-transparent',
      )}
    >
      {icon}
      {label}
    </button>
  )
}

export default function App() {
  return (
    <div className="flex min-h-screen flex-col border border-[#6b6b6b] bg-[#e2e2e2] font-['Noto_Sans','Segoe_UI',sans-serif] text-[11px] leading-4 text-black">
      <header>
        <div className="flex h-[30px] items-center bg-white pl-2">
          <LogoIcon />
          <h1 className="ml-[5px] flex-1">Cozinha/Cozinha - Promob</h1>
          <button type="button" aria-label="Minimizar" className="flex w-[46px] justify-center">
            <svg viewBox="0 0 10 10" className="size-2.5"><path d="M0 5.500h10" stroke="#000" /></svg>
          </button>
          <button type="button" aria-label="Maximizar" className="flex w-[46px] justify-center">
            <svg viewBox="0 0 10 10" className="size-2.5" fill="none"><path d="M.5.5h9v9h-9z" stroke="#000" /></svg>
          </button>
          <button type="button" aria-label="Fechar" className="flex w-[46px] justify-center">
            <svg viewBox="0 0 10 10" className="size-2.5"><path d="M0 0l10 10M10 0L0 10" stroke="#000" /></svg>
          </button>
        </div>

        <div className="bg-linear-to-r from-[#f0f0f0] to-[#fdfdfd]">
          <div className="flex h-6 items-center justify-between pl-1.5">
            <nav className="flex gap-px">
              {MENUS.map((m) => (
                <button key={m} type="button" className="px-[9px]">
                  {m}
                </button>
              ))}
            </nav>
            <div className="flex items-center gap-2 pr-1.5">
              <span className="pt-1 font-['Liberation_Sans',Arial,sans-serif]">Username - Documentação</span>
              <span className="flex size-6 items-center justify-center bg-[#9370db] text-xs font-medium">UD</span>
            </div>
          </div>
          <Toolbar />
        </div>
      </header>

      <div className="flex h-[23px] items-start pl-[27px]">
        <button
          type="button"
          className="flex h-5 items-center gap-1.5 rounded-b-sm border border-t-0 border-[#7a7a7a] bg-[#f0f0f0] pr-1.5 pl-1 text-[#6d6d6d]"
        >
          <PanelIcon />
          Módulos
        </button>
      </div>

      <main className="flex flex-1 items-stretch">
        <SideTabs />
        <ViewPanel />
        <div className="w-1 shrink-0" />
        <PropertiesPanel />
      </main>

      <div className="flex h-[23px] items-end pl-[27px]">
        <button
          type="button"
          className="flex h-5 items-center gap-1.5 rounded-t-sm border border-b-0 border-[#7a7a7a] bg-[#f0f0f0] px-1 text-[#6d6d6d]"
        >
          <PanelIcon red />
          Materiais
        </button>
      </div>

      <footer className="flex h-[23px] items-center justify-between bg-linear-to-r from-[#f0f0f0] to-[#fbfbfb] pl-1">
        <span className="whitespace-nowrap">
          Selecionado: Parede -&gt; Parede (4800x150x2600) - (Área: 12,48 m²) - (Normal: 0; 0; 1 Rotação: 0)
        </span>
        <div className="flex items-center gap-1">
          <StatusButton icon={<GlassesIcon />} label="Mostrar" />
          <Caret className="mr-1 w-[5px]" />
          <StatusButton active icon={<CollisionIcon />} label="Colisão" />
          <StatusButton active icon={<JunctionIcon />} label="Junções" />
          <span className="w-px" />
          <StatusButton icon={<LowerIcon />} label="Auto Rebaixar" />
          <button type="button" aria-label="Configurações" className="ml-1 mr-1">
            <WrenchIcon />
          </button>
          <svg viewBox="0 0 12 12" className="size-3 self-end" aria-hidden="true">
            <path d="M8 0h2v2H8zM4 4h2v2H4zM8 4h2v2H8zM0 8h2v2H0zM4 8h2v2H4zM8 8h2v2H8z" fill="#b0b0b0" />
          </svg>
        </div>
      </footer>
    </div>
  )
}
